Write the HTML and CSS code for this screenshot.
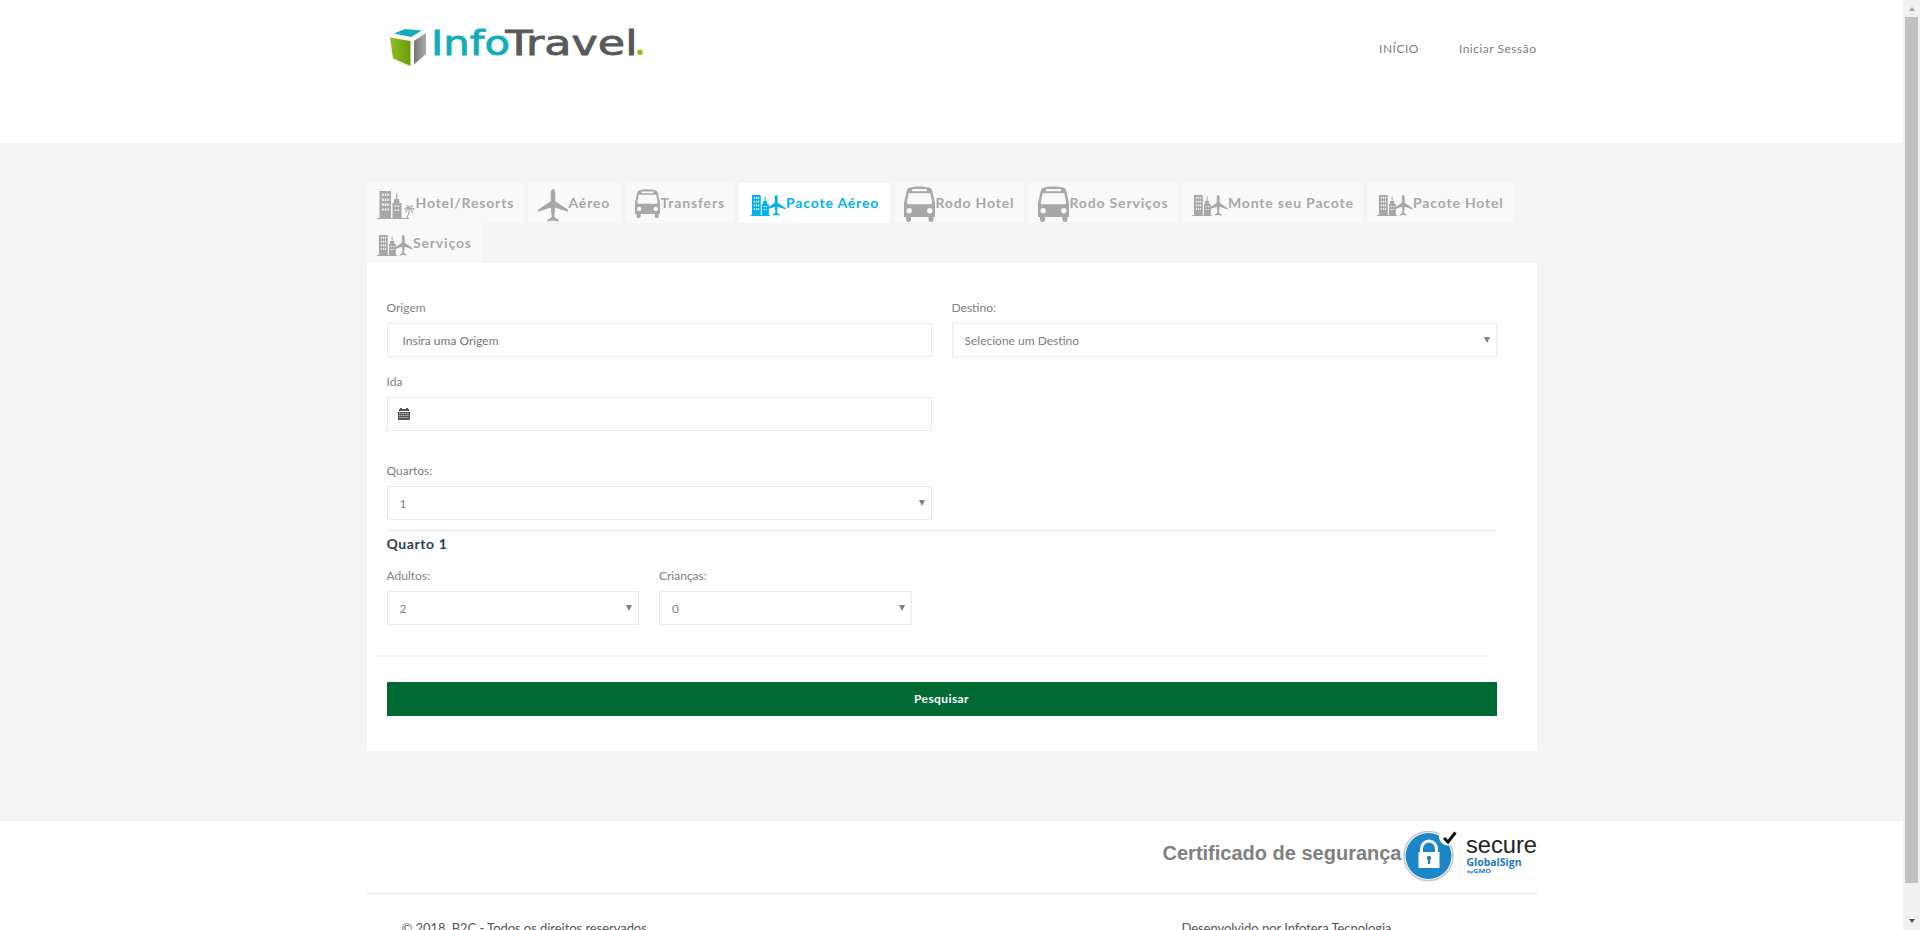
FILE: index.html
```
<!DOCTYPE html>
<html lang="pt-BR">
<head>
<meta charset="utf-8">
<title>InfoTravel</title>
<link rel="stylesheet" href="styles.css">
</head>
<body>
<svg class="sprite" aria-hidden="true">
  <symbol id="plane" viewBox="0 0 30 33"><path d="M15 0c1.600 0 2.300 2.600 2.300 5v7.200l12 8.100c.6.500.7 1.400.7 2.400l-12.900-4.300-.8 9.600 4 2.700c.4.400.4.900.4 1.700L15 31.400l-5.700 1c0-.8 0-1.300.4-1.700l4-2.700-.8-9.600L0 22.700c0-1 .1-1.900.7-2.400l12-8.100V5c0-2.400.7-5 2.300-5z"/></symbol>
  <symbol id="bus" viewBox="0 0 31 36" preserveAspectRatio="none"><path fill-rule="evenodd" d="M6 1.500C11 0 20 0 25 1.500c2 .6 3 1.700 3.300 3.500L31 17v14h-1.500v3q0 2-2.500 2T24.500 34v-3H7v3q0 2-2.500 2T2 34v-3H0V17L2.700 5C3 3.200 4 2.100 6 1.500zM8.500 3Q7 4.200 8.500 5.200h14Q24 4.200 22.500 3zM4.700 7.200 2.800 16.500q-.2 1.700 1.600 1.700h22.200q1.800 0 1.600-1.700L26.300 7.200zM5.200 22a2.700 2.700 0 1 0 0 5.400 2.700 2.700 0 0 0 0-5.400zm20.600 0a2.700 2.700 0 1 0 0 5.400 2.700 2.700 0 0 0 0-5.400z"/></symbol>
  <symbol id="city" viewBox="0 0 26 28" preserveAspectRatio="none"><path fill-rule="evenodd" d="M2.500 0H14v27h1.500V12H17V8h2V4l.7-3 .6 3v4h2v4H24.500v15H26v1H0v-1h2.500zM5 2.500v2.500h1.700V2.500zm2.800 0v2.500h1.500V2.500zm2.500 0v2.500h1.500V2.500zM5 7.500v2.500h1.700V7.500zm2.800 0v2.500h1.500V7.500zm2.500 0v2.500h1.500V7.500zM5 12.500v2.500h1.700v-2.500zm2.800 0v2.500h1.500v-2.500zm2.500 0v2.500h1.500v-2.500zM5 17.500v2h1.700v-2zm2.800 0v2h1.500v-2zm2.500 0v2h1.500v-2zM17.500 14.500v1.500h1.700v-1.500zm3 0v1.500h1.700v-1.500zm-3 4v1.500h1.700v-1.500zm3 0v1.500h1.700v-1.500z"/></symbol>
  <symbol id="cityplane" viewBox="0 0 36 21"><use href="#city" x="0" y="0" width="20" height="21"/><use href="#plane" x="16.500" y="0" width="19.500" height="21"/></symbol>
  <symbol id="resort" viewBox="0 0 38 28"><use href="#city" x="0" y="0" width="26" height="28"/><path d="M25 27h7v1h-7z"/><path class="palm" d="M29.500 27.500q3-5 3-10M32.500 17.500q-3-2-5 1M32.500 17.500q-4 .5-3.500 4.500M32.500 17q-1-3-3.500-2M32.500 17q1-3 3.500-2M32.500 17.500q4-1 5 1M32.500 17.500q3 1 2.500 4.500"/></symbol>
</svg>
<div class="window">
  <div class="page">
    <header class="header">
      <div class="container header-row">
        <svg class="logo" width="260" height="50" viewBox="0 0 260 50">
          <defs>
            <linearGradient id="green"><stop offset="0" stop-color="#91bd24"/><stop offset="1" stop-color="#6c9c0b"/></linearGradient>
            <linearGradient id="gray"><stop offset="0" stop-color="#777"/><stop offset="1" stop-color="#aaa"/></linearGradient>
          </defs>
          <path fill="#12adb8" d="M4 13.500 15 9l17 1.500-11 6.500z"/>
          <path fill="url(#green)" d="M0 17.500 20.500 21v25L3 38.500z"/>
          <path fill="url(#gray)" d="M24 21 36 13v21L24 44.500z"/>
          <text class="logo-text logo-info" x="41" y="34.500" textLength="79" lengthAdjust="spacingAndGlyphs">Info</text>
          <text class="logo-text logo-travel" x="115.500" y="34.500" textLength="132" lengthAdjust="spacingAndGlyphs">Travel</text>
          <circle cx="250" cy="32.300" r="2.700" fill="#a5b914"/>
        </svg>
        <nav class="nav"><a>INÍCIO</a><a>Iniciar Sessão</a></nav>
      </div>
    </header>
    <main class="main">
      <div class="container">
        <div class="tabs">
          <div class="tab t-hotel"><svg class="i-resort"><use href="#resort"/></svg><span>Hotel/Resorts</span></div>
          <div class="tab t-aereo"><svg class="i-plane"><use href="#plane"/></svg><span>Aéreo</span></div>
          <div class="tab t-transfers"><svg class="i-bus-small"><use href="#bus"/></svg><span>Transfers</span></div>
          <div class="tab t-pacote active"><svg class="i-city"><use href="#cityplane"/></svg><span>Pacote Aéreo</span></div>
          <div class="tab t-rodo"><svg class="i-bus"><use href="#bus"/></svg><span>Rodo Hotel</span></div>
          <div class="tab t-rodoserv"><svg class="i-bus"><use href="#bus"/></svg><span>Rodo Serviços</span></div>
          <div class="tab t-monte"><svg class="i-city"><use href="#cityplane"/></svg><span>Monte seu Pacote</span></div>
          <div class="tab t-pachotel"><svg class="i-city"><use href="#cityplane"/></svg><span>Pacote Hotel</span></div>
          <div class="tab t-servicos"><svg class="i-city"><use href="#cityplane"/></svg><span>Serviços</span></div>
        </div>
        <form class="panel">
          <div class="row">
            <div class="field"><label>Origem</label><div class="control input">Insira uma Origem</div></div>
            <div class="field"><label>Destino:</label><div class="control">Selecione um Destino<i class="caret"></i></div></div>
          </div>
          <div class="row row-date">
            <div class="field"><label>Ida</label><div class="control date">
              <svg width="12" height="12" viewBox="0 0 12 12"><path fill="#555" d="M1 1h1V0h2v1h4V0h2v1h1v2H1zM0 4h12v8H0z"/><path stroke="#b5b5b5" stroke-width="1" stroke-dasharray="1.500 .5" d="M1 5.500h10M1 7.500h10M1 9.500h10"/></svg>
            </div></div>
          </div>
          <div class="row row-rooms">
            <div class="field"><label>Quartos:</label><div class="control">1<i class="caret"></i></div></div>
          </div>
          <h4 class="room-title">Quarto 1</h4>
          <div class="row row-guests">
            <div class="field small"><label>Adultos:</label><div class="control">2<i class="caret"></i></div></div>
            <div class="field small"><label>Crianças:</label><div class="control">0<i class="caret"></i></div></div>
          </div>
          <div class="divider"></div>
          <div class="button">Pesquisar</div>
        </form>
      </div>
    </main>
    <footer class="footer container">
      <div class="security">
        <span class="security-label">Certificado de segurança</span>
        <svg class="seal" width="136" height="54" viewBox="0 0 136 54">
          <circle cx="27.500" cy="27" r="24.600" fill="#fff" stroke="#c8c8c8" stroke-width="1.500"/>
          <circle cx="27.500" cy="27" r="23" fill="#1d86c8"/>
          <circle cx="46.500" cy="8" r="8.500" fill="#fff"/>
          <path fill="none" stroke="#fff" stroke-width="3" d="M20.500 24v-4.500a7.500 7.500 0 0 1 15 0V24"/>
          <path fill="#fff" d="M17.500 23h21v16h-21z"/>
          <circle cx="28" cy="29" r="2.200" fill="#1d86c8"/><path fill="#1d86c8" d="M27 29h2v6h-2z"/>
          <path fill="none" stroke="#111" stroke-width="3" d="m43 9 4 4 7.500-9.500"/>
          <path stroke="#f0f0f0" d="M59.500 4v45"/>
          <text class="seal-secure" x="65" y="24" textLength="71" lengthAdjust="spacingAndGlyphs">secure</text>
          <text class="seal-brand" x="65.500" y="36.500" textLength="55" lengthAdjust="spacingAndGlyphs">GlobalSign</text>
          <text class="seal-gmo" x="66" y="44" textLength="24" lengthAdjust="spacingAndGlyphs"><tspan class="seal-by">by</tspan>GMO</text>
        </svg>
      </div>
      <div class="copyright"><span>© 2018, B2C - Todos os direitos reservados.</span><span>Desenvolvido por Infotera Tecnologia</span></div>
    </footer>
  </div>
  <div class="scrollbar"><i class="arrow-up"></i><div class="thumb"></div><i class="arrow-down"></i></div>
</div>
</body>
</html>
```
FILE: styles.css
```
* { box-sizing: border-box; }
body { margin: 0; font-family: Lato, sans-serif; font-size: 12px; color: #808080; background: #fff; overflow: hidden; }
.sprite { position: absolute; width: 0; height: 0; }
.window { display: flex; height: 930px; overflow: hidden; }
.page { flex: 1; min-width: 0; }
.container { width: 1170px; margin: 0 auto; }

.header { height: 143px; }
.header-row { display: flex; justify-content: space-between; padding: 20px 0 0 23px; }
.logo-text { font: 33px "DejaVu Sans", sans-serif; stroke-width: .8; }
.logo-info { fill: #12adb8; stroke: #12adb8; }
.logo-travel { fill: #58595b; stroke: #58595b; }
.nav { display: flex; gap: 40px; padding-top: 20px; font-size: 12px; line-height: 18px; letter-spacing: .5px; white-space: nowrap; }

.main { height: 678px; padding-top: 40px; background: #f4f4f4; }
.tabs { display: flex; flex-wrap: wrap; column-gap: 4px; }
.tab { display: flex; height: 40px; padding-left: 10px; background: #f9f9f9; color: #a8a8a8; fill: #a8a8a8; font-size: 14px; font-weight: 700; letter-spacing: .83px; line-height: 40px; white-space: nowrap; }
.tab svg { flex: none; display: block; }
.active { background: #fff; color: #00b3f0; fill: #00b3f0; }
.palm { fill: none; stroke: #a8a8a8; stroke-width: 1.1; }
.t-hotel { width: 157px; }
.t-aereo { width: 93px; }
.t-transfers { width: 110px; }
.t-pacote { width: 151px; padding-left: 11px; }
.t-rodo { width: 130px; }
.t-rodoserv { width: 150px; }
.t-monte { width: 181px; }
.t-pachotel { width: 147.500px; }
.t-servicos { width: 115px; }
.i-resort { width: 38px; height: 28px; margin: 8px 1px 0 0; }
.i-plane { width: 30px; height: 33px; margin: 6px 1px 0 0; }
.i-bus-small { width: 25px; height: 29px; margin: 6px 1px 0 0; }
.i-bus { width: 31px; height: 36px; margin: 3px 1px 0 0; }
.i-city { width: 36px; height: 21px; margin: 12px .5px 0 0; }

.panel { height: 488px; padding: 36px 40px 0 20px; background: #fff; }
.row { display: flex; gap: 20px; }
.row-date { margin-top: 16px; }
.row-rooms { margin-top: 31px; }
.row-guests { margin-top: 13px; }
.field { width: 545px; }
.small { width: 252.500px; }
label { display: block; height: 24px; line-height: 18px; font-size: 12px; }
.control { position: relative; height: 34px; border: 1px solid #e9e9e9; padding-left: 12px; line-height: 33px; font-size: 12px; }
.input { padding-left: 15px; color: #757575; }
.date { padding: 10px 0 0 10px; line-height: 0; }
.caret { position: absolute; right: 6px; top: 13px; border: 3px solid transparent; border-top: 6px solid #808080; border-bottom: 0; }
.room-title { margin: 10px 0 0; border-top: 1px solid #e4e4e4; padding-top: 4px; height: 24px; font-size: 14px; line-height: 18px; letter-spacing: .6px; color: #2d3e52; }
.divider { width: 1110px; height: 2px; margin: 30px 0 25px -10px; background: #f4f4f4; }
.button { height: 34px; background: #006a34; color: #fff; font-size: 12px; font-weight: 700; letter-spacing: .4px; line-height: 34px; text-align: center; }

.security { display: flex; justify-content: flex-end; height: 74px; padding-top: 8px; border-bottom: 3px solid #f4f4f4; }
.security-label { padding-top: 12px; margin-right: -1px; font: bold 20px/24px "Liberation Sans", Arial, sans-serif; }
.seal-secure { font: 24px "Liberation Sans", Arial, sans-serif; fill: #222; }
.seal-brand { font: bold 10px "Open Sans", sans-serif; fill: #1d78be; }
.seal-gmo { font: bold 5.500px "Open Sans", sans-serif; fill: #1d78be; }
.seal-by { font-size: 4px; }
.copyright { display: flex; padding: 23px 35px 0; font-size: 13px; line-height: 20px; letter-spacing: -.05px; color: #555; white-space: nowrap; }
.copyright span:first-child { width: 780px; }

.scrollbar { flex: none; display: flex; flex-direction: column; align-items: center; width: 17px; background: #f1f1f1; }
.thumb { width: 13px; height: 866px; margin-top: 6px; background: #c1c1c1; }
.arrow-up { margin-top: 7px; border: 3.500px solid transparent; border-bottom: 4px solid #a3a3a3; border-top: 0; }
.arrow-down { margin-top: 36px; border: 3.500px solid transparent; border-top: 4px solid #505050; border-bottom: 0; }
```
